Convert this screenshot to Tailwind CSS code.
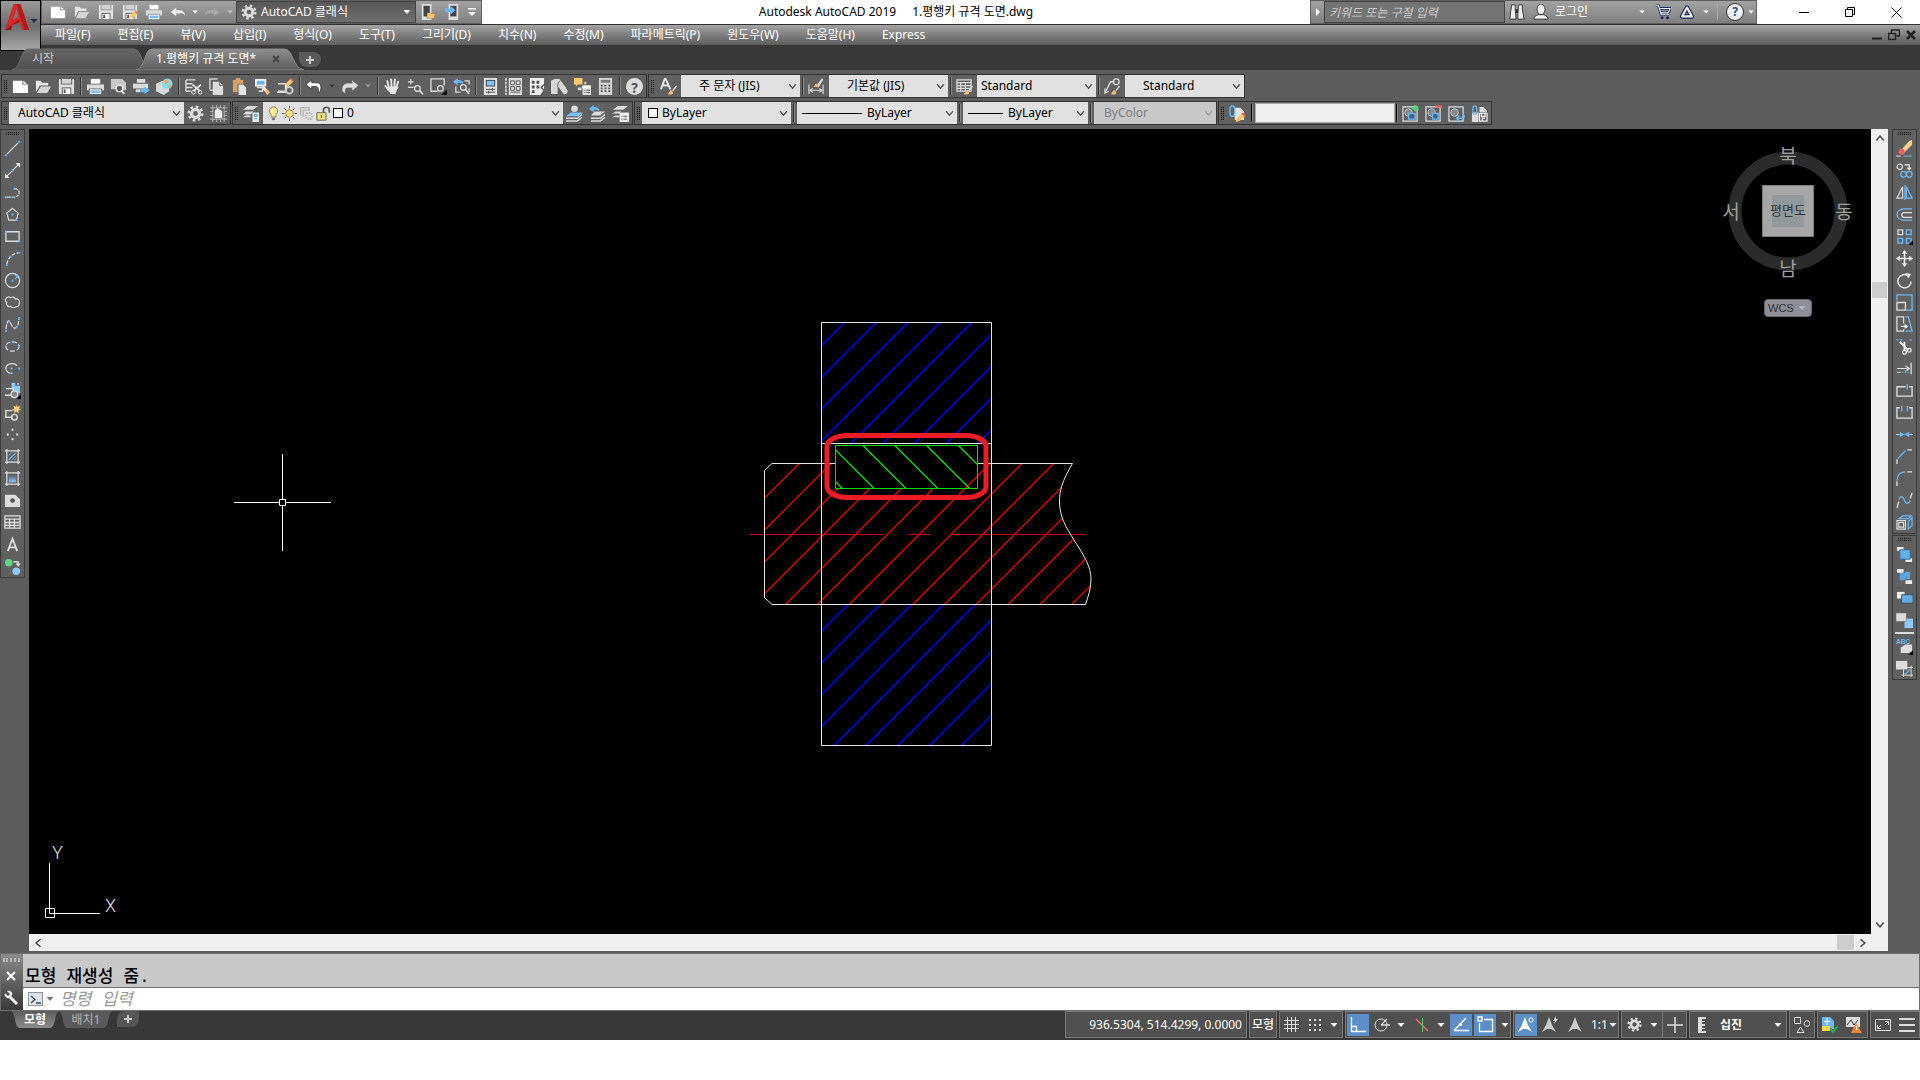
<!DOCTYPE html>
<html lang="ko">
<head>
<meta charset="utf-8">
<title>Autodesk AutoCAD 2019 - 1.평행키 규격 도면.dwg</title>
<script src="https://cdn.jsdelivr.net/npm/@tailwindcss/browser@4"></script>
</head>
<body class="flex h-screen flex-col overflow-hidden bg-white pb-10 font-['Noto_Sans','Noto_Sans_CJK_KR',sans-serif] text-xs text-white">

<!-- Icon library -->
<svg width="0" height="0" class="absolute" aria-hidden="true">
<defs>
<linearGradient id="g-blue" x2="0" y2="1"><stop offset="0" stop-color="#4a5a6a"/><stop offset="1" stop-color="#8cc8fa"/></linearGradient>
<linearGradient id="g-tab" x2="0" y2="1"><stop offset="0" stop-color="#8e8e8e"/><stop offset="1" stop-color="#5c5c5c"/></linearGradient>
<linearGradient id="g-tab-off" x2="0" y2="1"><stop offset="0" stop-color="#666"/><stop offset="1" stop-color="#505050"/></linearGradient>
<linearGradient id="g-btab" x2="0" y2="1"><stop offset="0" stop-color="#5c5c5c"/><stop offset="1" stop-color="#8c8c8c"/></linearGradient>
<symbol id="caret" viewBox="0 0 8 8"><path d="M0.500 2h7L4 6z" fill="currentColor"/></symbol>
<symbol id="chev" viewBox="0 0 8 8"><path d="M1 2l3 3.500 3-3.500" fill="none" stroke="currentColor" stroke-width="1.200"/></symbol>
<symbol id="new" viewBox="0 0 18 18"><path d="M1 3h10v4h6v9H1z" fill="#fff"/><path d="M12 3l4 3h-4z" fill="#fff"/></symbol>
<symbol id="open" viewBox="0 0 18 18"><path d="M1 15V3h5l2 2h6v3H5z" fill="#e6e6e6"/><path d="M6 9h11l-4 7H2z" fill="#d4d4d4"/></symbol>
<symbol id="save" viewBox="0 0 18 18"><path d="M1 1h2v6h12V1h2v16H1z" fill="#e0e0e0"/><path d="M4 1h10v5H4z" fill="#d2d2d2"/><path d="M4 10h10v7H4z" fill="#555"/><path d="M5 11h8v6H5z" fill="#fff"/><path d="M6 12h2v4H6z" fill="#555"/></symbol>
<symbol id="pencil" viewBox="0 0 10 10"><path d="M0 10l1-4 5-5 3 3-5 5z" fill="#fdc76b"/><path d="M6 1l1-1 3 3-1 1z" fill="#f0604c"/><path d="M0 10l.8-2.800 2 2z" fill="#fff"/></symbol>
<symbol id="saveas" viewBox="0 0 18 18"><use href="#save" width="18" height="18"/><use href="#pencil" x="8" y="7" width="10" height="10"/></symbol>
<symbol id="plot" viewBox="0 0 18 18"><path d="M4 1h10v5H4z" fill="#fff"/><path d="M0 7h18v6h-2v-2H2v2H0z" fill="#dcdcdc"/><path d="M3 12h12v5H3z" fill="#fff"/><path d="M4 13h10v3H4z" fill="#7cc0f8"/></symbol>
<symbol id="preview" viewBox="0 0 18 18"><path d="M1 1h12l4 4v8h-3a4 4 0 0 0-8-1H1z" fill="#c8c8c8"/><circle cx="10" cy="11" r="3.500" fill="#5c5c5c" stroke="#f0f0f0" stroke-width="1.400"/><path d="M12 13l3 4" stroke="#eee" stroke-width="2"/></symbol>
<symbol id="publish" viewBox="0 0 18 18"><path d="M4 1h9v4H4zM0 6h16v5H0zM3 12h5v3H3z" fill="#dcdcdc"/><path d="M8 11h4V9l6 4-6 4v-2H8z" fill="#6cb8f5"/></symbol>
<symbol id="globe" viewBox="0 0 18 18"><path d="M0 6l7-3 7 4v7l-6 4-8-4z" fill="#d8d8d8"/><circle cx="12" cy="6" r="5.500" fill="#7fe0ea"/><path d="M8 3l4-2 2 3-4 3zM13 8l4-1-2 4z" fill="#f2a477"/></symbol>
<symbol id="cut" viewBox="0 0 18 18"><path d="M1 2h10M1 6h7M1 10h7M1 14h5M1 2v12" stroke="#dcdcdc" stroke-width="1.500" fill="none"/><path d="M8 7l8 7M17 7l-8 7" stroke="#eee" stroke-width="1.800"/><circle cx="9" cy="15" r="2" fill="none" stroke="#eee"/><circle cx="16" cy="15" r="2" fill="none" stroke="#eee"/></symbol>
<symbol id="copy" viewBox="0 0 18 18"><path d="M2 12V1h8M2 13h3" stroke="#d0d0d0" fill="none" stroke-width="1.500"/><path d="M5 4h7l4 4v10H5z" fill="#dcdcdc"/><path d="M12 4v4h4" fill="none" stroke="#777"/></symbol>
<symbol id="paste" viewBox="0 0 18 18"><path d="M2 2h3V0h5v2h3v4H7v9H2z" fill="#d3a067"/><path d="M8 7h5l3 3v8H8z" fill="#e4e4e4"/></symbol>
<symbol id="brush" viewBox="0 0 10 10"><path d="M5 5l4-5 1 1-4 5z" fill="#ddd"/><path d="M0 9c2-1 2-4 4-4l2 2c0 3-4 3-6 2z" fill="#fdc07a"/></symbol>
<symbol id="match" viewBox="0 0 18 18"><path d="M1 1h12v8H1z" fill="#eee"/><path d="M3 3h8v4H3z" fill="#6cb8f5"/><path d="M3 10h6v4H5" fill="none" stroke="#ddd" stroke-width="1.500"/><path d="M9 11l2-2 6 6-3 3z" fill="#fdc07a"/><path d="M8 9l3 0 2 3-2 2z" fill="#eee"/></symbol>
<symbol id="blk" viewBox="0 0 18 18"><path d="M1 6h8v8H1M0 15h10" stroke="#ddd" fill="none" stroke-width="1.500"/><circle cx="13" cy="13" r="3.500" fill="none" stroke="#ccc" stroke-width="2"/><use href="#pencil" x="8" y="0" width="10" height="10"/></symbol>
<symbol id="undo" viewBox="0 0 18 18"><path d="M0 7l6-5v3h5c4 0 6 3 4 9l-2 2c1-6-1-7-3-7H6v3z" fill="#fff" stroke="#333" stroke-width=".8"/></symbol>
<symbol id="redo" viewBox="0 0 18 18"><path d="M18 8l-6-5v3H7c-4 0-6 3-5 8l2 2c0-5 1-6 3-6h5v3z" fill="#ddd" stroke="#ddd" stroke-width=".5"/></symbol>
<symbol id="undo2" viewBox="0 0 18 18"><path d="M1 9l6-5v3c6-1 9 1 10 6-2-3-5-3-10-2v3z" fill="#eee"/></symbol>
<symbol id="redo2" viewBox="0 0 18 18"><path d="M17 9l-6-5v3C5 6 2 8 1 13c2-3 5-3 10-2v3z" fill="#a8a8a8"/></symbol>
<symbol id="pan" viewBox="0 0 18 18"><path d="M5 10L3.500 3M8 9L7.500 1.500M11 9l.5-7.500M13 10l2-6M5 13L1.500 8.500" stroke="#e6e6e6" stroke-width="2" stroke-linecap="round"/><path d="M4 9h10c2 0 1 2 0 3l-2 5H7L3 11z" fill="#e6e6e6"/></symbol>
<symbol id="zoomrt" viewBox="0 0 18 18"><path d="M1 4h6M4 1v6M1 10h6" stroke="#ddd" stroke-width="1.300"/><circle cx="11" cy="11" r="3" fill="none" stroke="#ddd" stroke-width="1.400"/><path d="M13 13l4 4" stroke="#ddd" stroke-width="1.800"/></symbol>
<symbol id="zoomwin" viewBox="0 0 18 18"><path d="M8 14H1V1h14v7" fill="none" stroke="#ddd" stroke-width="1.400"/><circle cx="11" cy="11" r="3" fill="none" stroke="#ddd" stroke-width="1.300"/><path d="M18 12v6h-6z" fill="#000"/></symbol>
<symbol id="zoomprev" viewBox="0 0 18 18"><path d="M3 9v6h5M12 3h5v4M17 11v4" stroke="#ddd" fill="none" stroke-width="1.400"/><circle cx="11" cy="10" r="3" fill="none" stroke="#ddd" stroke-width="1.400"/><path d="M13 12l4 5" stroke="#ddd" stroke-width="1.600"/><path d="M0 4l5-4v2c4 0 6 1 6 5-2-2-3-2-6-2v3z" fill="#6cb8f5"/></symbol>
<symbol id="props" viewBox="0 0 18 18"><path d="M2 0h14v18H2z" fill="#e4e4e4"/><path d="M4 2h10v7H4z" fill="#444"/><path d="M5 3h8v5H5z" fill="#7cc4ff"/><path d="M4 12h10M4 15h10M11 10.500v3M7 13.500v3" stroke="#444"/></symbol>
<symbol id="dcenter" viewBox="0 0 18 18"><path d="M1 0v18" stroke="#ccc" stroke-width="2" stroke-dasharray="3 1"/><path d="M4 0h14v18H4z" fill="#ddd"/><path d="M6 3h4v4H6zM12 3h4v4h-4zM6 9h4v4H6zM12 9h4v4h-4zM6 15h10" fill="none" stroke="#555"/></symbol>
<symbol id="palette" viewBox="0 0 18 18"><path d="M2 0h15v12l-4 6H2z" fill="#eee"/><path d="M4 3h3v3H4zM9 3h3v3H9zM4 8h3v3H4zM9 8h3v3H9zM4 13h3v3H4z" fill="#555"/><path d="M18 6l-4 4 3 3" fill="none" stroke="#5c5c5c" stroke-width="1.500"/></symbol>
<symbol id="sheet" viewBox="0 0 18 18"><path d="M0 3l4-2h5l8 11c2 3-1 6-4 5L7 9v8H0z" fill="#d8d8d8"/><path d="M7 9c0-4 2-6 3-6M7 9l6 8" fill="none" stroke="#666"/></symbol>
<symbol id="markup" viewBox="0 0 18 18"><path d="M0 0h9v7H4L2 9V7H0z" fill="#fdc96f"/><path d="M11 4h2v3h-2zM4 10h4v3H4zM9 8h9v10H9z" fill="#ddd"/><path d="M9 8h9v3H9z" fill="#fff"/><path d="M11 13h1M13 13h4M11 15.500h1M13 15.500h4" stroke="#555"/></symbol>
<symbol id="calc" viewBox="0 0 18 18"><path d="M2 0h14v18H2z" fill="#d6d6d6"/><path d="M4 2h10v3H4z" fill="#777"/><path d="M4 8h10M4 11h10M4 14h10" stroke="#555" stroke-width="1.800" stroke-dasharray="2 2"/></symbol>
<symbol id="tstyle" viewBox="0 0 18 18"><path d="M1 12L5 1h1l5 11M3 8h6" fill="none" stroke="#e6e6e6" stroke-width="2"/><use href="#brush" x="8" y="8" width="10" height="10"/></symbol>
<symbol id="dstyle" viewBox="0 0 18 18"><path d="M1 7v10M16 7v10M2 13h13M5 11l-3 2 3 2M12 11l3 2-3 2" fill="none" stroke="#ddd" stroke-width="1.200"/><path d="M9 8l6-8 1 2-5 8z" fill="#ddd"/><path d="M5 9c2 0 2-3 4-3l2 2c-1 2-4 2-6 1z" fill="#fdc07a"/></symbol>
<symbol id="tbstyle" viewBox="0 0 18 18"><path d="M1 2h15v12H1zM1 5h15M1 8h15M1 11h15M5 5v9M10 5v9" fill="none" stroke="#ddd" stroke-width="1.300"/><use href="#brush" x="8" y="8" width="10" height="10"/></symbol>
<symbol id="mlstyle" viewBox="0 0 18 18"><circle cx="13" cy="4" r="3" fill="none" stroke="#ddd" stroke-width="1.400"/><path d="M10 4H7L2 14M1 11l0 5 4-2" fill="none" stroke="#ddd" stroke-width="1.400"/><use href="#brush" x="7" y="8" width="10" height="10"/></symbol>
<symbol id="gear" viewBox="0 0 18 18"><circle cx="9" cy="9" r="4.300" fill="none" stroke="#dcdcdc" stroke-width="3.400"/><circle cx="9" cy="9" r="7.200" fill="none" stroke="#dcdcdc" stroke-width="2.600" stroke-dasharray="2.800 2.850"/></symbol>
<symbol id="wsave" viewBox="0 0 18 18"><path d="M3 0v18M15 0v18M0 3h18M0 15h18M7 0v3M11 0v3M0 7h3M0 11h3M15 7h3M15 11h3M7 15v3M11 15v3" stroke="#ccc" stroke-width=".8"/><path d="M5 6l3-3 5 4v7H5z" fill="#eee"/></symbol>
<symbol id="layers" viewBox="0 0 18 18"><path d="M5 1h11l-5 4H0zM3 7h8l-3 3H0zM0 13h8v-2l-5 0z" fill="#ddd"/><path d="M10 8h7v10h-7z" fill="#eee"/><path d="M12 10h3v2h-3zM12 14.500h3" stroke="#4a90d0" fill="none"/></symbol>
<symbol id="laycur" viewBox="0 0 18 18"><path d="M5 8h13l-5 4H0z" fill="#7cc4ff"/><path d="M0 14h12l5-4M0 17h12l5-4" fill="none" stroke="#ddd" stroke-width="1.500"/><circle cx="9" cy="4" r="3.500" fill="#ddd"/></symbol>
<symbol id="layprev" viewBox="0 0 18 18"><path d="M6 7h11l-5 4H2z" fill="#ddd"/><path d="M2 14h10l5-4M2 17h10l5-4" fill="none" stroke="#ddd" stroke-width="1.500"/><path d="M0 4l5-4v2c4 0 6 1 6 5-2-2-3-2-6-2v3z" fill="#6cb8f5"/></symbol>
<symbol id="laystate" viewBox="0 0 18 18"><path d="M6 1h11l-5 4H1zM4 7h6l-2 2H0zM0 13h8v-2H3z" fill="#ddd"/><path d="M8 8h10v10H8z" fill="#eee"/><path d="M10 12h1M12 12h4M10 15h1M12 15h4" stroke="#555"/></symbol>
<symbol id="bulb" viewBox="0 0 16 18"><path d="M8 1a5 5 0 0 1 3 9v3H5v-3a5 5 0 0 1 3-9z" fill="#fde9a0" stroke="#8a7434" stroke-width="1"/><path d="M6 14h4v3H6z" fill="#777"/></symbol>
<symbol id="sun" viewBox="0 0 18 18"><circle cx="9" cy="9" r="4.500" fill="#fde08a" stroke="#a08030"/><path d="M9 0v3M9 15v3M0 9h3M15 9h3M3 3l2 2M13 13l2 2M3 15l2-2M13 5l2-2" stroke="#666" stroke-width="1.200"/></symbol>
<symbol id="vpf" viewBox="0 0 18 18"><path d="M2 11V2h10v4M5 13V5h6" fill="none" stroke="#b4b4b4" stroke-width="1.600"/><circle cx="12" cy="12" r="4" fill="none" stroke="#b4b4b4" stroke-width="2" stroke-dasharray="2 1"/></symbol>
<symbol id="lock" viewBox="0 0 18 18"><path d="M9 8V5a3.500 3.500 0 0 1 7 0v3" fill="none" stroke="#555" stroke-width="2"/><path d="M1 8h11v9H1z" fill="#f5e07c" stroke="#555"/><path d="M6.500 11v3" stroke="#555" stroke-width="1.500"/></symbol>
<symbol id="clipedit" viewBox="0 0 18 18"><path d="M6 3h6l4 4v9H6z" fill="#e4e4e4"/><rect x="1" y="1" width="5" height="11" rx="2.500" fill="none" stroke="#6cb8f5" stroke-width="1.500"/><path d="M7 18l1-4 6-5 3 3-6 5z" fill="#fdc76b"/><path d="M13 9l2-1 3 3-1 2z" fill="#f0604c"/></symbol>
<symbol id="ref" viewBox="0 0 18 18"><path d="M1 2h15v15H1z" fill="none" stroke="#ddd" stroke-width="1.300"/><circle cx="7" cy="8" r="4" fill="#888" stroke="#b8c8d8"/></symbol>
<symbol id="refadd" viewBox="0 0 18 18"><use href="#ref" width="18" height="18"/><path d="M7 9h7v6H7z" fill="#41617a" stroke="#6cb8f5" stroke-width="1.400"/><path d="M14 0v7M10.500 3.500h7" stroke="#4fd07a" stroke-width="2.400"/></symbol>
<symbol id="refdel" viewBox="0 0 18 18"><use href="#ref" width="18" height="18"/><path d="M8 9h6v6H8z" fill="#41617a" stroke="#6cb8f5" stroke-width="1.400"/><path d="M11 1.500h7" stroke="#f0605c" stroke-width="2.600"/></symbol>
<symbol id="refback" viewBox="0 0 18 18"><use href="#ref" width="18" height="18"/><path d="M10 14h5c3 0 3-4 0-4M12 11l-3 3 3 3" fill="none" stroke="#6cb8f5" stroke-width="1.500"/></symbol>
<symbol id="refsave" viewBox="0 0 18 18"><path d="M1 8h7v10H1zM9 2h4l4 4v2H9z" fill="#ddd"/><rect x="2" y="1" width="4" height="9" rx="2" fill="none" stroke="#6cb8f5" stroke-width="1.300"/><path d="M9 9h8v8H9zM11 9v3h4V9M12 17v-3h3" fill="none" stroke="#eee" stroke-width="1.300"/></symbol>
<!-- draw tools -->
<symbol id="line" viewBox="0 0 18 18"><path d="M3 15L15 3" stroke="#ddd" stroke-width="1.300"/><path d="M1 15h2v2H1zM15 1h2v2h-2z" fill="#6cb8f5"/></symbol>
<symbol id="xline" viewBox="0 0 18 18"><path d="M2 16L16 2" stroke="#ddd" stroke-width="1.300"/><path d="M17 1v5l-5-5zM1 17v-5l5 5z" fill="#ddd"/><path d="M8 8h2v2H8z" fill="#6cb8f5"/></symbol>
<symbol id="pline" viewBox="0 0 18 18"><path d="M3 14h7M11 5c6 0 7 7 2 8" fill="none" stroke="#ddd" stroke-width="1.300" stroke-dasharray="4 1"/><path d="M1 13h2v2H1zM10 4h2v2h-2zM10 13h2v2h-2z" fill="#6cb8f5"/></symbol>
<symbol id="polygon" viewBox="0 0 18 18"><path d="M9 2.500l6 5-2 7.500H5L3 7.500z" fill="none" stroke="#ddd" stroke-width="1.200"/><path d="M8 8h2v2H8zM12 14h2v2h-2z" fill="#6cb8f5"/></symbol>
<symbol id="rect" viewBox="0 0 18 18"><path d="M2 4h14v10H2z" fill="none" stroke="#ddd" stroke-width="1.400"/><path d="M1 3h2v2H1zM15 13h2v2h-2z" fill="#6cb8f5"/></symbol>
<symbol id="arc" viewBox="0 0 18 18"><path d="M3 15C4 9 8 4 15 3" fill="none" stroke="#ddd" stroke-width="1.300" stroke-dasharray="4 1.500"/><path d="M2 15h2v2H2zM6 6h2v2H6zM15 2h2v2h-2z" fill="#6cb8f5"/></symbol>
<symbol id="circle" viewBox="0 0 18 18"><circle cx="9" cy="9" r="7.500" fill="none" stroke="#ddd" stroke-width="1.300"/><path d="M8 8h2v2H8zM11 3h4v4l-1-1-2 2-1-1 2-2z" fill="#6cb8f5"/></symbol>
<symbol id="cloud" viewBox="0 0 18 18"><path d="M3 9a3 3 0 0 1-1-4 3 3 0 0 1 5-1 3 3 0 0 1 5 1.500 3 3 0 0 1 4 4 3 3 0 0 1-3 4 4 3 0 0 1-6-.5 3 3 0 0 1-4-4z" fill="none" stroke="#ddd" stroke-width="1.200"/></symbol>
<symbol id="spline" viewBox="0 0 18 18"><path d="M2 14C3 8 4 3 6 6s4 9 7 6 2-6 3-9" fill="none" stroke="#ddd" stroke-width="1.300" stroke-dasharray="5 1"/><path d="M1 15h2v2H1zM4 5h2v2H4zM12 11h2v2h-2zM15 1h2v2h-2z" fill="#6cb8f5"/></symbol>
<symbol id="ellipse" viewBox="0 0 18 18"><ellipse cx="9" cy="9" rx="7" ry="5" fill="none" stroke="#ddd" stroke-width="1.300" stroke-dasharray="5 2"/><path d="M1 8h2v2H1zM15 8h2v2h-2zM8 3h2v2H8z" fill="#6cb8f5"/></symbol>
<symbol id="earc" viewBox="0 0 18 18"><path d="M14 6C10 2 2 4 2 9c0 2 2 5 5 5" fill="none" stroke="#ddd" stroke-width="1.300"/><path d="M7 8h2v2H7zM15 8h2v2h-2zM7 13h2v2H7z" fill="#6cb8f5"/></symbol>
<symbol id="insert" viewBox="0 0 18 18"><path d="M8 1h4v3h5v8h-4L8 7zM14 1h2v2h-2z" fill="#8ccaff"/><path d="M2 7h8v7H2M1 14h10" fill="none" stroke="#ddd" stroke-width="1.500"/><circle cx="11" cy="13" r="3.500" fill="#888" stroke="#ddd" stroke-width="1.300"/><path d="M18 13v5h-5z" fill="#000"/></symbol>
<symbol id="mkblk" viewBox="0 0 18 18"><path d="M9 7H2v7M1 14h8" fill="none" stroke="#ddd" stroke-width="1.500"/><circle cx="11" cy="14" r="3" fill="none" stroke="#ddd" stroke-width="1.500"/><path d="M13 0l1 3 3-1-1 3 2 1-3 1 1 3-3-2-2 2 0-3-3-1 3-1-1-3 3 1z" fill="#ffd280"/></symbol>
<symbol id="point" viewBox="0 0 18 18"><path d="M8 3h2v2H8zM3 8h2v2H3zM13 8h2v2h-2zM8 13h2v2H8z" fill="#eee"/></symbol>
<symbol id="hatch" viewBox="0 0 18 18"><path d="M3 1v16M15 1v16M1 3h16M1 15h16" stroke="#ddd" stroke-width="1.300"/><path d="M5 8l3-3M5 12l7-7M8 13l5-5M5 13l8-8M11 13l2-2" stroke="#6cb8f5"/></symbol>
<symbol id="grad" viewBox="0 0 18 18"><path d="M3 1v16M15 1v16M1 3h16M1 15h16" stroke="#ddd" stroke-width="1.300"/><path d="M5 5h8v8H5z" fill="url(#g-blue)"/></symbol>
<symbol id="region" viewBox="0 0 18 18"><path d="M1 3h11l5 5v8H1z" fill="#ddd"/><circle cx="9" cy="9" r="2.500" fill="#555"/></symbol>
<symbol id="table" viewBox="0 0 18 18"><path d="M1 2h16v13H1zM1 5.500h16M1 9h16M1 12h16M6 5v10M11 5v10" fill="none" stroke="#ddd" stroke-width="1.400"/></symbol>
<symbol id="mtext" viewBox="0 0 18 18"><path d="M4 16L9 3l5 13M5.500 12h7" fill="none" stroke="#ddd" stroke-width="2"/></symbol>
<symbol id="addsel" viewBox="0 0 18 18"><circle cx="5" cy="5" r="4" fill="#5fd880"/><circle cx="13" cy="14" r="4" fill="#8ccaff"/><path d="M10 4h5v4M13 6l2 2 2-2" fill="none" stroke="#eee" stroke-width="1.300"/></symbol>
<!-- modify tools -->
<symbol id="erase" viewBox="0 0 18 18"><path d="M5 11L14 1l3-1v5l-9 9z" fill="#fdd08a"/><circle cx="6" cy="12.500" r="3.200" fill="#f0605c"/><path d="M0 17h5" stroke="#ddd"/><path d="M8 17h9" stroke="#6cb8f5"/></symbol>
<symbol id="mcopy" viewBox="0 0 18 18"><circle cx="4" cy="5" r="2.800" fill="none" stroke="#ddd" stroke-width="1.300"/><path d="M9 3h5v5M12 6l2 2 2-2" fill="none" stroke="#eee" stroke-width="1.300"/><circle cx="8" cy="13" r="3" fill="none" stroke="#6cb8f5" stroke-width="1.400"/><circle cx="14" cy="13" r="3" fill="none" stroke="#6cb8f5" stroke-width="1.400"/></symbol>
<symbol id="mirror" viewBox="0 0 18 18"><path d="M7 3v12H1z" fill="none" stroke="#ddd" stroke-width="1.300"/><path d="M9.500 1v16M11 3v12h6z" fill="none" stroke="#6cb8f5" stroke-width="1.300"/></symbol>
<symbol id="offset" viewBox="0 0 18 18"><path d="M17 3H8c-9 0-9 12 0 12h9" fill="none" stroke="#6cb8f5" stroke-width="1.400"/><path d="M17 7H9c-4 0-4 5 0 5h8" fill="none" stroke="#ddd" stroke-width="1.400"/></symbol>
<symbol id="array" viewBox="0 0 18 18"><path d="M2 2h5v5H2z" fill="none" stroke="#ddd" stroke-width="1.400"/><path d="M11 2h5v5h-5zM2 11h5v5H2zM11 11h5v5h-5z" fill="none" stroke="#6cb8f5" stroke-width="1.400"/><path d="M18 13v5h-5z" fill="#000"/></symbol>
<symbol id="move" viewBox="0 0 18 18"><path d="M9 3v12M3 9h12" stroke="#eee" stroke-width="1.600"/><path d="M9 0l3 4H6zM9 18l3-4H6zM0 9l4-3v6zM18 9l-4-3v6z" fill="#eee"/></symbol>
<symbol id="rotate" viewBox="0 0 18 18"><path d="M13 4a7 7 0 1 0 3 6" fill="none" stroke="#eee" stroke-width="1.500"/><path d="M10 1l6 1-3 5z" fill="#eee"/></symbol>
<symbol id="scale" viewBox="0 0 18 18"><path d="M1 7V1h16v16h-6" fill="none" stroke="#6cb8f5" stroke-width="1.400"/><path d="M1 9h9v8H1z" fill="none" stroke="#ddd" stroke-width="1.400"/></symbol>
<symbol id="stretch" viewBox="0 0 18 18"><path d="M8 8V1H1v15h7v-2" fill="none" stroke="#ddd" stroke-width="1.400"/><path d="M10 1h3l4 15h-7" fill="none" stroke="#6cb8f5" stroke-width="1.400"/><path d="M5 11h6M9 9l3 2-3 2" stroke="#eee" fill="none" stroke-width="1.300"/></symbol>
<symbol id="trim" viewBox="0 0 18 18"><path d="M0 2h7M14 2h4" stroke="#6cb8f5" stroke-dasharray="3 1"/><path d="M4 4l9 9M9 4v9" stroke="#eee" stroke-width="2"/><circle cx="9" cy="15" r="2" fill="none" stroke="#eee" stroke-width="1.300"/><circle cx="14" cy="13" r="2" fill="none" stroke="#eee" stroke-width="1.300"/></symbol>
<symbol id="extend" viewBox="0 0 18 18"><path d="M16 3v12" stroke="#ddd" stroke-width="1.400"/><path d="M1 9h11M10 6l4 3-4 3" stroke="#eee" fill="none" stroke-width="1.300"/><path d="M1 13h4" stroke="#ddd"/><path d="M6 13h9" stroke="#6cb8f5" stroke-dasharray="2 1"/></symbol>
<symbol id="breakpt" viewBox="0 0 18 18"><path d="M10 5H1v10h16V5h-3" fill="none" stroke="#ddd" stroke-width="1.400"/><path d="M12 2v6" stroke="#6cb8f5" stroke-width="1.400"/></symbol>
<symbol id="break" viewBox="0 0 18 18"><path d="M4 4H1v11h16V4h-3" fill="none" stroke="#ddd" stroke-width="1.400"/><path d="M6 2v6M12 2v6" stroke="#6cb8f5" stroke-width="1.400"/></symbol>
<symbol id="join" viewBox="0 0 18 18"><path d="M0 9h18" stroke="#ddd"/><path d="M3 9h12" stroke="#6cb8f5"/><path d="M4 6l5 3-5 3zM14 6L9 9l5 3z" fill="#6cb8f5"/></symbol>
<symbol id="chamfer" viewBox="0 0 18 18"><path d="M1 17v-5M12 2h5" stroke="#ddd" stroke-width="1.400"/><path d="M2 11l8-8" stroke="#6cb8f5" stroke-width="1.400"/></symbol>
<symbol id="fillet" viewBox="0 0 18 18"><path d="M1 17v-5M12 2h5" stroke="#ddd" stroke-width="1.400"/><path d="M1 11c0-6 4-9 9-9" fill="none" stroke="#6cb8f5" stroke-width="1.400"/></symbol>
<symbol id="blend" viewBox="0 0 18 18"><path d="M1 17l2-7M15 7l2-6" stroke="#ddd" stroke-width="1.400"/><path d="M3 8c2-6 5-2 6 1s4 5 6 0" fill="none" stroke="#6cb8f5" stroke-width="1.400"/></symbol>
<symbol id="explode" viewBox="0 0 18 18"><path d="M1 7h9v9H1zM3 9h5v5H3z" fill="none" stroke="#ddd" stroke-width="1.300"/><path d="M3 5l4-3h9l-3 3zM13 8l4-4v8l-4 4z" fill="none" stroke="#6cb8f5" stroke-width="1.300"/></symbol>
<symbol id="front" viewBox="0 0 18 18"><path d="M1 1h7v4H1zM10 13h7v4h-7z" fill="#eee"/><path d="M4 4h11v10H4z" fill="#64aee8" stroke="#3a6a94"/></symbol>
<symbol id="back" viewBox="0 0 18 18"><path d="M4 5h6v-1h5v8H9v1H4z" fill="#5aa4e0"/><path d="M1 1h7v4H1zM10 13h7v4h-7z" fill="#eee"/></symbol>
<symbol id="above" viewBox="0 0 18 18"><path d="M1 2h8v7H1z" fill="#eee"/><path d="M6 5h12v9H6z" fill="#64aee8" stroke="#4a4a4a"/></symbol>
<symbol id="under" viewBox="0 0 18 18"><path d="M9 7h9v10H9z" fill="#8ccaff"/><path d="M0 1h11v9H0z" fill="#ddd" stroke="#5c5c5c" stroke-width=".5"/></symbol>
<symbol id="annfront" viewBox="0 0 18 18"><text x="0" y="6" font-size="7" font-weight="700" fill="#6cb8f5" font-family="Liberation Sans">ABC</text><path d="M5 10l5-3h7v7l-3 2H5z" fill="#ddd"/><path d="M18 13v5h-5z" fill="#000"/></symbol>
<symbol id="hback" viewBox="0 0 18 18"><path d="M0 1h12v9H0z" fill="#ddd"/><path d="M6 8h12M6 16h12M8 6v12M16 6v12" stroke="#ddd"/><path d="M9 15l6-6M10 15l5-4" stroke="#6cb8f5"/></symbol>
</defs>
</svg>

<header class="shrink-0">
<div class="flex">
  <!-- application menu button -->
  <button aria-label="응용프로그램 메뉴" class="flex h-[51px] w-[41px] shrink-0 border border-black bg-linear-to-b from-[#9a9a9a] via-[#6c6c6c] to-[#a8a8a8]">
    <svg class="mt-[2px] ml-1 h-7 w-6" viewBox="0 0 25 29"><path d="M0 28L9 1h7l9 27h-7l-3-8-7 2-1 6z" fill="#d8262c"/><path d="M12 6L8 18l6-4z" fill="#787878"/><path d="M0 28l15-11v3l-8 3-1 5z" fill="#8c1418"/><path d="M12 1h4l9 27h-5z" fill="#b01a20"/></svg>
    <svg class="mt-4 ml-px size-2 text-[#222c3c]"><use href="#caret"/></svg>
  </button>
  <div class="min-w-0 flex-1">
    <!-- title bar -->
    <div class="flex h-6 bg-white text-black">
      <div class="flex w-[441px] shrink-0 items-center border border-[#5e5e5e] bg-linear-to-b from-[#a2a2a2] to-[#808080] pl-1 text-white [&>*]:shrink-0 [&>button]:grid [&>button]:h-full [&>button]:w-6 [&>button]:place-items-center [&>button>svg]:size-4">
        <button aria-label="새로 만들기"><svg><use href="#new"/></svg></button>
        <button aria-label="열기"><svg><use href="#open"/></svg></button>
        <button aria-label="저장"><svg><use href="#save"/></svg></button>
        <button aria-label="다른 이름으로 저장"><svg><use href="#saveas"/></svg></button>
        <button aria-label="플롯"><svg><use href="#plot"/></svg></button>
        <button aria-label="명령 취소"><svg><use href="#undo2"/></svg></button>
        <svg class="mx-[2px] size-[6px]"><use href="#caret"/></svg>
        <button aria-label="명령 복구"><svg><use href="#redo2"/></svg></button>
        <svg class="mx-[3px] size-[6px] text-[#c8c8c8]"><use href="#caret"/></svg>
        <label class="relative flex h-[22px] w-[180px] items-center border border-[#444] bg-linear-to-b from-[#585858] to-[#6e6e6e] pl-1">
          <svg class="size-4 shrink-0"><use href="#gear"/></svg>
          <select aria-label="작업공간" class="h-full w-full appearance-none bg-transparent pl-1 outline-none"><option>AutoCAD 클래식</option></select>
          <svg class="pointer-events-none absolute right-1 size-2"><use href="#caret"/></svg>
        </label>
        <button aria-label="모바일에서 열기"><svg viewBox="0 0 18 18"><path d="M2 0h11v18H2z" fill="#ddd"/><path d="M4 2h7v12H4z" fill="#444"/><path d="M8 16v-6h4l1 1h4l-1 5z" fill="#fdc96f" stroke="#8a6a30" stroke-width=".5"/></svg></button>
        <button aria-label="모바일로 저장"><svg viewBox="0 0 18 18"><path d="M5 0h11v18H5z" fill="#ddd"/><path d="M7 2h7v12H7z" fill="#444"/><path d="M1 5h6V2l6 5-6 5V9H1z" fill="#6cb8f5"/></svg></button>
        <button aria-label="도구막대 사용자화" class="!w-4"><svg viewBox="0 0 16 16"><path d="M4 4h8v1.500H4zM4 8h8l-4 4z" fill="#fff"/></svg></button>
      </div>
      <h1 class="flex flex-1 items-center justify-center gap-4 whitespace-nowrap text-xs"><span>Autodesk AutoCAD 2019</span><span>1.평행키 규격 도면.dwg</span></h1>
      <div class="flex w-[447px] shrink-0 items-center border border-[#5e5e5e] bg-linear-to-b from-[#a2a2a2] to-[#808080] text-white">
        <button aria-label="검색 축소" class="grid w-[13px] place-items-center"><svg class="h-2 w-1" viewBox="0 0 4 8"><path d="M0 0l4 4-4 4z" fill="#fff"/></svg></button>
        <input type="search" aria-label="검색" placeholder="키워드 또는 구절 입력" class="h-[22px] w-[181px] border border-[#444] bg-[#747474] px-1 text-xs italic outline-none placeholder:text-[#ccc]">
        <button aria-label="찾기" class="grid w-6 place-items-center"><svg class="size-4" viewBox="0 0 18 18"><path d="M3 1h4v5l1 11H1L2 8zM11 1h4v5l2 11h-7V8z" fill="#eee" stroke="#333"/><path d="M7.500 6h3v4h-3z" fill="#333"/></svg></button>
        <button class="flex w-[110px] items-center gap-[6px]"><svg class="ml-1 size-4" viewBox="0 0 18 18"><ellipse cx="9" cy="6" rx="4.500" ry="6" fill="#eee" stroke="#333"/><path d="M1 17c0-4 4-4 5-5h6c1 1 5 1 5 5z" fill="#eee" stroke="#333"/></svg>로그인</button>
        <svg class="size-[6px]"><use href="#caret"/></svg>
        <button aria-label="앱 스토어" class="ml-[6px] grid w-6 place-items-center"><svg class="size-4" viewBox="0 0 18 18"><path d="M1 2h3l3 10h9M5 5h12l-2 5H6.500" fill="none" stroke="#1c2c5c" stroke-width="3"/><path d="M1 2h3l3 10h9M5 5h12l-2 5H6.500" fill="none" stroke="#eee" stroke-width="1.200"/><circle cx="8" cy="15.500" r="1.700" fill="#1c2c5c"/><circle cx="14" cy="15.500" r="1.700" fill="#1c2c5c"/></svg></button>
        <button aria-label="연결" class="grid w-6 place-items-center"><svg class="size-4" viewBox="0 0 18 18"><path d="M9 4l5.500 10h-11z" fill="none" stroke="#1c2c5c" stroke-width="5" stroke-linejoin="round"/><path d="M9 4l5.500 10h-11z" fill="none" stroke="#eee" stroke-width="2.500" stroke-linejoin="round"/></svg></button>
        <svg class="mx-1 size-[6px]"><use href="#caret"/></svg>
        <span class="mx-1 h-4 w-px bg-[#aaa]"></span>
        <button aria-label="도움말" class="ml-1 grid size-[18px] place-items-center rounded-full border border-[#333] bg-[#f0f0f0] text-xs font-bold text-[#1c4ca8]">?</button>
        <svg class="ml-1 size-[6px]"><use href="#caret"/></svg>
      </div>
      <div class="flex w-[163px] shrink-0 pl-6 text-black [&>button]:grid [&>button]:w-[46px] [&>button]:place-items-center">
        <button aria-label="최소화"><svg class="size-[10px]"><path d="M0 5.500h10" stroke="#000"/></svg></button>
        <button aria-label="이전 크기로"><svg class="size-[10px]"><path d="M.5 2.500h7v7h-7zM2.500 2.500v-2h7v7h-2" fill="none" stroke="#000"/></svg></button>
        <button aria-label="닫기"><svg class="size-[11px]"><path d="M.5.5l10 10M10.500.5l-10 10" stroke="#000"/></svg></button>
      </div>
    </div>
    <!-- menu bar -->
    <nav class="mb-[6px] flex h-[21px] items-center border-t border-[#333] bg-linear-to-b from-[#a4a4a4] to-[#5c5c5c] pl-[14px] [&>button]:mr-[27px] [&>button]:whitespace-nowrap">
      <button>파일(F)</button><button>편집(E)</button><button>뷰(V)</button><button>삽입(I)</button><button>형식(O)</button><button>도구(T)</button><button>그리기(D)</button><button>치수(N)</button><button>수정(M)</button><button>파라메트릭(P)</button><button>윈도우(W)</button><button>도움말(H)</button><button>Express</button>
      <div class="ml-auto flex items-center gap-[6px] pr-1">
        <svg class="h-3 w-[10px]"><path d="M0 9.500h10" stroke="#222" stroke-width="2"/></svg>
        <svg class="size-3"><path d="M.5 4.500h7v6h-7zM3.500 4v-3h8v6h-3" fill="none" stroke="#222" stroke-width="1.500"/></svg>
        <svg class="h-3 w-[10px]"><path d="M1 2l8 8M9 2l-8 8" stroke="#222" stroke-width="2.500"/></svg>
      </div>
    </nav>
  </div>
</div>

<!-- file tabs -->
<div class="-mt-[6px] flex h-[25px] items-end bg-[#383838] pl-3" role="tablist">
  <button role="tab" aria-selected="false" class="relative -mr-3 h-[22px] w-[136px] text-left text-[#c8c8c8]">
    <svg class="absolute inset-0 size-full" viewBox="0 0 136 22" preserveAspectRatio="none"><path d="M0 22C10 20 8 1 16 1H122c8 0 8 19 14 21z" fill="url(#g-tab-off)" stroke="#6c6c6c"/></svg>
    <span class="relative pl-5">시작</span>
  </button>
  <button role="tab" aria-selected="true" class="relative h-[22px] w-[168px] text-left">
    <svg class="absolute inset-0 size-full" viewBox="0 0 168 22" preserveAspectRatio="none"><path d="M0 22C10 20 8 1 16 1H148c10 0 8 19 20 21z" fill="url(#g-tab)" stroke="#8a8a8a"/></svg>
    <span class="relative flex items-center gap-4 pl-5 whitespace-nowrap">1.평행키 규격 도면*<svg class="size-2"><path d="M1 1l6 6M7 1l-6 6" stroke="#444" stroke-width="2"/></svg></span>
  </button>
  <button aria-label="새 도면" class="mb-[3px] ml-[-5px] grid h-[15px] w-[22px] place-items-center rounded-tr-lg rounded-br-lg rounded-bl-lg bg-[#5a5a5a]"><svg class="size-2"><path d="M4 0v8M0 4h8" stroke="#ccc" stroke-width="2"/></svg></button>
</div>
</header>

<!-- toolbars -->
<div class="flex shrink-0 flex-col gap-[3px] bg-[#5c5c5c] py-1 text-[#555]">
  <div class="flex h-6 gap-px pl-px">
    <div role="toolbar" aria-label="표준" class="flex items-center border border-[#333] bg-[#606060] pl-[2px] [&_button]:grid [&_button]:h-5 [&_button]:w-[23px] [&_button]:place-items-center [&_button>svg]:size-[17px]">
      <span class="mr-[2px] h-[13px] w-[3px] border-x border-dotted border-black"></span>
      <button aria-label="새로 만들기"><svg><use href="#new"/></svg></button>
      <button aria-label="열기"><svg><use href="#open"/></svg></button>
      <button aria-label="저장"><svg><use href="#save"/></svg></button>
      <span class="mx-[2px] h-[18px] w-[2px] border-l border-[#333] bg-[#888]"></span>
      <button aria-label="플롯"><svg><use href="#plot"/></svg></button>
      <button aria-label="플롯 미리보기"><svg><use href="#preview"/></svg></button>
      <button aria-label="게시"><svg><use href="#publish"/></svg></button>
      <button aria-label="3DDWF"><svg><use href="#globe"/></svg></button>
      <span class="mx-[2px] h-[18px] w-[2px] border-l border-[#333] bg-[#888]"></span>
      <button aria-label="잘라내기"><svg><use href="#cut"/></svg></button>
      <button aria-label="복사"><svg><use href="#copy"/></svg></button>
      <button aria-label="붙여넣기"><svg><use href="#paste"/></svg></button>
      <button aria-label="특성 일치"><svg><use href="#match"/></svg></button>
      <button aria-label="블록 편집기"><svg><use href="#blk"/></svg></button>
      <span class="mx-[2px] h-[18px] w-[2px] border-l border-[#333] bg-[#888]"></span>
      <button aria-label="명령 취소"><svg><use href="#undo"/></svg></button>
      <svg class="mx-[3px] size-[6px] text-[#333]"><use href="#caret"/></svg>
      <button aria-label="명령 복구"><svg><use href="#redo"/></svg></button>
      <svg class="mx-[4px] size-[6px] text-[#999]"><use href="#caret"/></svg>
      <span class="mx-[2px] h-[18px] w-[2px] border-l border-[#333] bg-[#888]"></span>
      <button aria-label="초점이동"><svg><use href="#pan"/></svg></button>
      <button aria-label="실시간 줌"><svg><use href="#zoomrt"/></svg></button>
      <button aria-label="줌 윈도우"><svg><use href="#zoomwin"/></svg></button>
      <button aria-label="이전 줌"><svg><use href="#zoomprev"/></svg></button>
      <span class="mx-[2px] h-[18px] w-[2px] border-l border-[#333] bg-[#888]"></span>
      <button aria-label="특성"><svg><use href="#props"/></svg></button>
      <button aria-label="디자인센터"><svg><use href="#dcenter"/></svg></button>
      <button aria-label="도구 팔레트"><svg><use href="#palette"/></svg></button>
      <button aria-label="시트 세트"><svg><use href="#sheet"/></svg></button>
      <button aria-label="표식 세트"><svg><use href="#markup"/></svg></button>
      <button aria-label="빠른계산기"><svg><use href="#calc"/></svg></button>
      <span class="mx-[2px] h-[18px] w-[2px] border-l border-[#333] bg-[#888]"></span>
      <button aria-label="도움말"><span class="grid size-[17px] place-items-center rounded-full bg-[#ddd] text-sm font-bold text-[#555]">?</span></button>
    </div>
    <div role="toolbar" aria-label="스타일" class="flex items-center border border-[#333] bg-[#606060] [&_button]:grid [&_button]:h-5 [&_button]:w-[25px] [&_button]:place-items-center [&_button>svg]:size-[17px] [&_label]:relative [&_label]:flex [&_label]:h-[22px] [&_label]:w-[119px] [&_label]:items-center [&_label]:bg-[#e1e1e1] [&_select]:h-full [&_select]:w-full [&_select]:appearance-none [&_select]:bg-transparent [&_select]:text-black [&_select]:outline-none">
      <span class="mx-[2px] h-[13px] w-[3px] border-x border-dotted border-black"></span>
      <button aria-label="문자 스타일"><svg><use href="#tstyle"/></svg></button>
      <label><select aria-label="문자 스타일 목록" class="pl-[18px]"><option>주 문자 (JIS)</option></select><svg class="pointer-events-none absolute right-[3px] size-[9px]"><use href="#chev"/></svg></label>
      <span class="ml-[2px] h-[18px] w-[2px] border-l border-[#333] bg-[#888]"></span>
      <button aria-label="치수 스타일"><svg><use href="#dstyle"/></svg></button>
      <label><select aria-label="치수 스타일 목록" class="pl-[18px]"><option>기본값 (JIS)</option></select><svg class="pointer-events-none absolute right-[3px] size-[9px]"><use href="#chev"/></svg></label>
      <span class="ml-[2px] h-[18px] w-[2px] border-l border-[#333] bg-[#888]"></span>
      <button aria-label="테이블 스타일"><svg><use href="#tbstyle"/></svg></button>
      <label><select aria-label="테이블 스타일 목록" class="pl-1"><option>Standard</option></select><svg class="pointer-events-none absolute right-[3px] size-[9px]"><use href="#chev"/></svg></label>
      <span class="ml-[2px] h-[18px] w-[2px] border-l border-[#333] bg-[#888]"></span>
      <button aria-label="다중 지시선 스타일"><svg><use href="#mlstyle"/></svg></button>
      <label><select aria-label="다중 지시선 스타일 목록" class="pl-[18px]"><option>Standard</option></select><svg class="pointer-events-none absolute right-[3px] size-[9px]"><use href="#chev"/></svg></label>
    </div>
  </div>

  <div class="flex h-6 gap-px pl-px [&_button]:grid [&_button]:h-5 [&_button]:w-[23px] [&_button]:shrink-0 [&_button]:place-items-center [&_button>svg]:size-[17px] [&_label]:relative [&_label]:flex [&_label]:h-[22px] [&_label]:items-center [&_label]:bg-[#e1e1e1] [&_select]:h-full [&_select]:w-full [&_select]:appearance-none [&_select]:bg-transparent [&_select]:text-black [&_select]:outline-none">
    <div role="toolbar" aria-label="작업공간" class="flex w-[230px] items-center border border-[#333] bg-[#606060]">
      <span class="mx-[2px] h-[13px] w-[3px] border-x border-dotted border-black"></span>
      <label class="w-[176px]"><select aria-label="작업공간 목록" class="pl-[9px]"><option>AutoCAD 클래식</option></select><svg class="pointer-events-none absolute right-[3px] size-[9px]"><use href="#chev"/></svg></label>
      <button aria-label="작업공간 설정"><svg><use href="#gear"/></svg></button>
      <button aria-label="내 작업공간"><svg><use href="#wsave"/></svg></button>
    </div>
    <div role="toolbar" aria-label="도면층" class="flex w-[401px] items-center border border-[#333] bg-[#606060]">
      <span class="mx-[2px] h-[13px] w-[3px] border-x border-dotted border-black"></span>
      <button aria-label="도면층 특성"><svg><use href="#layers"/></svg></button>
      <label class="w-[301px] pl-[2px]">
        <svg class="h-[15px] w-[17px] shrink-0"><use href="#bulb"/></svg><svg class="size-[15px] shrink-0"><use href="#sun"/></svg><svg class="ml-[2px] size-[15px] shrink-0"><use href="#vpf"/></svg><svg class="ml-[2px] size-[15px] shrink-0"><use href="#lock"/></svg>
        <span class="ml-[2px] size-[10px] shrink-0 border border-black bg-white"></span>
        <select aria-label="도면층 목록" class="pl-1"><option>0</option></select><svg class="pointer-events-none absolute right-[3px] size-[9px]"><use href="#chev"/></svg></label>
      <button aria-label="객체의 도면층을 현재로"><svg><use href="#laycur"/></svg></button>
      <button aria-label="이전 도면층"><svg><use href="#layprev"/></svg></button>
      <button aria-label="도면층 상태"><svg><use href="#laystate"/></svg></button>
    </div>
    <div role="toolbar" aria-label="특성" class="flex w-[583px] items-center border border-[#333] bg-[#606060]">
      <span class="mx-[2px] h-[13px] w-[3px] border-x border-dotted border-black"></span>
      <label class="w-[149px]"><span class="ml-[6px] size-[10px] shrink-0 border border-black bg-white"></span><select aria-label="색상" class="pl-1"><option>ByLayer</option></select><svg class="pointer-events-none absolute right-[3px] size-[9px]"><use href="#chev"/></svg></label>
      <span class="mx-[2px] h-[18px] w-[2px] border-l border-[#333] bg-[#888]"></span>
      <label class="w-[160px]"><span class="ml-[5px] h-px w-[60px] shrink-0 bg-black"></span><select aria-label="선종류" class="pl-[5px]"><option>ByLayer</option></select><svg class="pointer-events-none absolute right-[3px] size-[9px]"><use href="#chev"/></svg></label>
      <span class="mx-[2px] h-[18px] w-[2px] border-l border-[#333] bg-[#888]"></span>
      <label class="w-[125px]"><span class="ml-[5px] h-px w-[35px] shrink-0 bg-black"></span><select aria-label="선가중치" class="pl-[5px]"><option>ByLayer</option></select><svg class="pointer-events-none absolute right-[3px] size-[9px]"><use href="#chev"/></svg></label>
      <span class="mx-[2px] h-[18px] w-[2px] border-l border-[#333] bg-[#888]"></span>
      <label class="flex-1 !bg-[#c8c8c8] text-[#a0a0a0]"><select aria-label="플롯 스타일" disabled class="pl-[10px] !text-[#808080]"><option>ByColor</option></select><svg class="pointer-events-none absolute right-[3px] size-[9px]"><use href="#chev"/></svg></label>
    </div>
    <div role="toolbar" aria-label="참조 편집" class="flex items-center border border-[#333] bg-[#606060]">
      <span class="mx-[2px] h-[13px] w-[3px] border-x border-dotted border-black"></span>
      <button aria-label="참조 내부 편집"><svg><use href="#clipedit"/></svg></button>
      <span class="mx-[2px] h-[18px] w-[2px] border-l border-black bg-[#888]"></span>
      <input type="text" aria-label="참조 이름" readonly class="h-5 w-[140px] border border-[#aaa] bg-[#f0f0f0] px-1 outline-none">
      <span class="mx-px h-[18px] w-[2px] border-l border-black bg-[#888]"></span>
      <button aria-label="작업 세트에 추가"><svg><use href="#refadd"/></svg></button>
      <button aria-label="작업 세트에서 제거"><svg><use href="#refdel"/></svg></button>
      <button aria-label="참조 편집 취소"><svg><use href="#refback"/></svg></button>
      <button aria-label="참조 편집 저장"><svg><use href="#refsave"/></svg></button>
    </div>
  </div>
</div>

<!-- work area -->
<main class="flex min-h-0 flex-1 bg-[#5c5c5c]">
  <aside class="w-[29px] shrink-0">
    <div role="toolbar" aria-label="그리기" class="flex w-[25px] flex-col items-center border border-[#3a3a3a] bg-[#606060] [&>button]:grid [&>button]:h-[22px] [&>button]:w-full [&>button]:place-items-center [&>button>svg]:size-[17px]">
      <span class="my-[2px] h-[3px] w-[13px] border-y border-dotted border-black"></span>
      <button aria-label="선"><svg><use href="#line"/></svg></button>
      <button aria-label="구성선"><svg><use href="#xline"/></svg></button>
      <button aria-label="폴리선"><svg><use href="#pline"/></svg></button>
      <button aria-label="폴리곤"><svg><use href="#polygon"/></svg></button>
      <button aria-label="직사각형"><svg><use href="#rect"/></svg></button>
      <button aria-label="호"><svg><use href="#arc"/></svg></button>
      <button aria-label="원"><svg><use href="#circle"/></svg></button>
      <button aria-label="구름형 수정기호"><svg><use href="#cloud"/></svg></button>
      <button aria-label="스플라인"><svg><use href="#spline"/></svg></button>
      <button aria-label="타원"><svg><use href="#ellipse"/></svg></button>
      <button aria-label="타원 호"><svg><use href="#earc"/></svg></button>
      <button aria-label="블록 삽입"><svg><use href="#insert"/></svg></button>
      <button aria-label="블록 작성"><svg><use href="#mkblk"/></svg></button>
      <button aria-label="점"><svg><use href="#point"/></svg></button>
      <button aria-label="해치"><svg><use href="#hatch"/></svg></button>
      <button aria-label="그라데이션"><svg><use href="#grad"/></svg></button>
      <button aria-label="영역"><svg><use href="#region"/></svg></button>
      <button aria-label="테이블"><svg><use href="#table"/></svg></button>
      <button aria-label="여러 줄 문자"><svg><use href="#mtext"/></svg></button>
      <button aria-label="선택 항목 추가"><svg><use href="#addsel"/></svg></button>
    </div>
  </aside>

  <div class="mb-[2px] flex min-w-0 flex-1 flex-col">
    <div class="flex min-h-0 flex-1">
      <section aria-label="도면 영역" class="relative min-w-0 flex-1 overflow-hidden bg-black">
        <svg class="absolute inset-0 size-full" fill="none" stroke-width="1">
          <defs>
            <clipPath id="hub-top"><path d="M792 193h171v121H792z"/></clipPath>
            <clipPath id="hub-bottom"><path d="M792 476h171v141H792z"/></clipPath>
            <clipPath id="key"><path d="M806 316h143v44H806z"/></clipPath>
            <clipPath id="shaft"><path clip-rule="evenodd" d="M743 335L736 342V468L743 475H1056.500C1059 468 1062 460 1062 450C1062 438 1056 428 1045 411C1037 398 1030.500 388 1030.500 372C1030.500 362 1033 352 1043.500 335H949V345L934 360H806V335z"/></clipPath>
          </defs>
          <g clip-path="url(#hub-top)" stroke="#0000ff" stroke-width="1.400"><path d="M816.0 193l-130 130M847.800 193l-130 130M879.600 193l-130 130M911.400 193l-130 130M943.200 193l-130 130M975.0 193l-130 130M1006.800 193l-130 130M1038.600 193l-130 130M1070.400 193l-130 130"/></g>
          <g clip-path="url(#hub-bottom)" stroke="#0000ff" stroke-width="1.400"><path d="M819.0 475.500l-150 150M850.800 475.500l-150 150M882.600 475.500l-150 150M914.400 475.500l-150 150M946.200 475.500l-150 150M978.0 475.500l-150 150M1009.800 475.500l-150 150M1041.600 475.500l-150 150M1073.400 475.500l-150 150"/></g>
          <g clip-path="url(#shaft)" stroke="#f00000" stroke-width="1.300"><path d="M770.200 334.500l-150 150M802.0 334.500l-150 150M833.800 334.500l-150 150M865.600 334.500l-150 150M897.400 334.500l-150 150M929.200 334.500l-150 150M961.0 334.500l-150 150M992.800 334.500l-150 150M1024.600 334.500l-150 150M1056.400 334.500l-150 150M1088.200 334.500l-150 150M1120.0 334.500l-150 150M1151.800 334.500l-150 150M1183.600 334.500l-150 150"/></g>
          <path stroke="#c80000" d="M721 405.500h134M878 405.500h22M923 405.500h134"/>
          <g clip-path="url(#key)" stroke="#00e800" stroke-width="1.300"><path d="M770.400 316.500l50 50M802.200 316.500l50 50M834.0 316.500l50 50M865.800 316.500l50 50M897.600 316.500l50 50M929.400 316.500l50 50"/></g>
          <path stroke="#e6e6e6" d="M792.500 193.500h170v423h-170zM792.500 314.500h170M806 334.500H743L735.500 341.500V468.500L743 475.500H1056.500C1059 468 1062 460 1062 450C1062 438 1056 428 1045 411C1037 398 1030.500 388 1030.500 372C1030.500 362 1033 352 1043.500 334.500H949"/>
          <path stroke="#00e000" d="M806.500 316.500h142v43h-142z"/>
          <rect x="798" y="306.500" width="159" height="62" rx="20" ry="11" stroke="#ed1c24" stroke-width="5"/>
          <path stroke="#fff" d="M205 373.500h45M257 373.500h45M253.500 325v45M253.500 377v45M250.500 370.500h6v6h-6z"/>
        </svg>
        <!-- UCS icon -->
        <svg class="absolute bottom-3 left-3 h-20 w-[84px]" fill="none" stroke="#fff">
          <path d="M8.500 21v50.500H59M4.500 66.500h9v9h-9z"/>
          <g fill="#e6e6e6" stroke="none" font-size="18" font-weight="300" font-family="Roboto, sans-serif"><text x="11" y="17">Y</text><text x="64" y="70">X</text></g>
        </svg>
        <!-- view cube -->
        <div class="absolute top-3 right-[13px] flex w-[140px] flex-col items-center gap-[17px]">
          <svg class="h-[141px] w-[140px]" fill="#a0a0a0" font-size="19" text-anchor="middle">
            <circle cx="70" cy="70" r="53" fill="none" stroke="#2b2b2b" stroke-width="13"/>
            <path d="M44.500 44.500h51v51h-51z" fill="#a6a6a6" stroke="#7c7c7c"/><path d="M54 54h32v32H54z" fill="#92999d"/>
            <text x="70" y="22">북</text><text x="70" y="135">남</text><text x="13" y="78">서</text><text x="126" y="78">동</text>
            <text x="70" y="74" font-size="13" fill="#33383c">평면도</text>
          </svg>
          <button class="flex h-[18px] w-12 items-center gap-1 rounded border border-[#66666e] bg-[#8e8e98] px-[3px] font-['Liberation_Sans',sans-serif] text-[11px] text-[#333]">WCS<svg class="size-2 text-[#b4b4bc]"><use href="#caret"/></svg></button>
        </div>
      </section>
      <div class="flex w-[17px] shrink-0 flex-col items-center bg-[#f0f0f0] text-[#444]">
        <svg class="my-1 size-[10px] rotate-180"><use href="#chev"/></svg>
        <span class="mt-[135px] h-4 w-[15px] bg-[#cdcdcd]"></span>
        <svg class="mt-auto mb-1 size-[10px]"><use href="#chev"/></svg>
      </div>
    </div>
    <div class="flex h-[17px] shrink-0 items-center bg-[#f0f0f0] pr-5 pl-1 text-[#444]">
      <svg class="size-[10px] rotate-90"><use href="#chev"/></svg>
      <span class="mr-1 ml-auto h-[15px] w-[17px] bg-[#cdcdcd]"></span>
      <svg class="size-[10px] -rotate-90"><use href="#chev"/></svg>
    </div>
  </div>

  <aside class="flex w-8 shrink-0 flex-col gap-px pl-1">
    <div role="toolbar" aria-label="수정" class="flex w-[25px] flex-col items-center border border-[#3a3a3a] bg-[#606060] [&>button]:grid [&>button]:h-[22px] [&>button]:w-full [&>button]:place-items-center [&>button>svg]:size-[17px]">
      <span class="my-[2px] h-[3px] w-[13px] border-y border-dotted border-black"></span>
      <button aria-label="지우기"><svg><use href="#erase"/></svg></button>
      <button aria-label="복사"><svg><use href="#mcopy"/></svg></button>
      <button aria-label="대칭"><svg><use href="#mirror"/></svg></button>
      <button aria-label="간격띄우기"><svg><use href="#offset"/></svg></button>
      <button aria-label="배열"><svg><use href="#array"/></svg></button>
      <button aria-label="이동"><svg><use href="#move"/></svg></button>
      <button aria-label="회전"><svg><use href="#rotate"/></svg></button>
      <button aria-label="축척"><svg><use href="#scale"/></svg></button>
      <button aria-label="신축"><svg><use href="#stretch"/></svg></button>
      <button aria-label="자르기"><svg><use href="#trim"/></svg></button>
      <button aria-label="연장"><svg><use href="#extend"/></svg></button>
      <button aria-label="점에서 끊기"><svg><use href="#breakpt"/></svg></button>
      <button aria-label="끊기"><svg><use href="#break"/></svg></button>
      <button aria-label="결합"><svg><use href="#join"/></svg></button>
      <button aria-label="모따기"><svg><use href="#chamfer"/></svg></button>
      <button aria-label="모깎기"><svg><use href="#fillet"/></svg></button>
      <button aria-label="곡선 혼합"><svg><use href="#blend"/></svg></button>
      <button aria-label="분해"><svg><use href="#explode"/></svg></button>
    </div>
    <div role="toolbar" aria-label="그리기 순서" class="flex w-[25px] flex-col items-center border border-[#3a3a3a] bg-[#606060] [&>button]:grid [&>button]:h-[22px] [&>button]:w-full [&>button]:place-items-center [&>button>svg]:size-[17px]">
      <span class="my-[2px] h-[3px] w-[13px] border-y border-dotted border-black"></span>
      <button aria-label="맨 앞으로"><svg><use href="#front"/></svg></button>
      <button aria-label="맨 뒤로"><svg><use href="#back"/></svg></button>
      <button aria-label="객체 위로"><svg><use href="#above"/></svg></button>
      <button aria-label="객체 아래로"><svg><use href="#under"/></svg></button>
      <span class="my-px h-[2px] w-[19px] bg-[#ddd]"></span>
      <button aria-label="주석을 앞으로"><svg><use href="#annfront"/></svg></button>
      <button aria-label="해치를 뒤로"><svg><use href="#hback"/></svg></button>
    </div>
  </aside>
</main>

<!-- command window -->
<section aria-label="명령행" class="flex h-[58px] shrink-0 border border-[#6e6e6e] bg-white">
  <div class="flex w-[22px] shrink-0 flex-col items-center gap-[9px] bg-linear-to-b from-[#8c8c8c] to-[#3a3a3a] pt-1 pr-[2px]">
    <span class="h-1 w-[17px] border-y-2 border-dotted border-[#b8b8b8]"></span>
    <button aria-label="닫기"><svg class="size-[10px]"><path d="M1 1l8 8M9 1l-8 8" stroke="#fff" stroke-width="2"/></svg></button>
    <button aria-label="사용자화"><svg class="size-[15px]" viewBox="0 0 15 15"><path d="M6 7l7 7" stroke="#eee" stroke-width="3"/><path d="M1 3l3 3 2-2-3-3c4-1 6 2 5 4S5 9 3 8 0 5 1 3z" fill="#eee"/></svg></button>
  </div>
  <div class="flex min-w-0 flex-1 flex-col font-['Liberation_Mono','Noto_Sans_CJK_KR',monospace] text-[17px]">
    <output class="flex h-[34px] items-end border-b border-[#6e6e6e] bg-[#c8c8c8] pl-[2px] leading-[18px] font-medium text-black">모형 재생성 줌.</output>
    <label class="flex flex-1 items-center pl-[5px]">
      <span class="grid h-[14px] w-[15px] place-items-center border border-[#8a929c] bg-[#dfe4ea]"><svg class="size-[11px]"><path d="M1 2l4 3.500L1 9M6 9h5" fill="none" stroke="#345" stroke-width="1.300"/></svg></span>
      <svg class="mx-[3px] size-2 text-[#777]"><use href="#caret"/></svg>
      <input type="text" aria-label="명령 입력" placeholder="명령 입력" class="h-full min-w-0 flex-1 pt-[2px] pl-[3px] text-black italic outline-none placeholder:text-[#999]">
    </label>
  </div>
</section>

<!-- layout tabs and status bar -->
<footer class="flex h-[29px] shrink-0 items-start justify-between bg-[#383838]">
  <div class="flex pl-[11px]" role="tablist">
    <button role="tab" aria-selected="true" class="relative h-[18px] w-[48px] leading-4 font-bold">
      <svg class="absolute inset-0 size-full" viewBox="0 0 48 18" preserveAspectRatio="none"><path d="M0 0h48c-5 2-3 17-9 17H9C3 17 5 2 0 0z" fill="url(#g-btab)"/></svg><span class="relative">모형</span></button>
    <button role="tab" aria-selected="false" class="relative h-[18px] w-[54px] leading-4 text-[#b4b4b4]">
      <svg class="absolute inset-0 size-full" viewBox="0 0 56 18" preserveAspectRatio="none"><path d="M0 0h56c-6 2-4 17-10 17H9C3 17 5 2 0 0z" fill="#5a5a5a"/></svg><span class="relative">배치1</span></button>
    <button aria-label="새 배치" class="ml-1 grid h-4 w-[22px] place-items-center rounded-tl-lg rounded-br-lg bg-[#555]"><svg class="size-2"><path d="M4 0v8M0 4h8" stroke="#ccc" stroke-width="2"/></svg></button>
  </div>
  <div class="flex h-[27px] gap-[2px] leading-none [&>div]:flex [&>div]:items-center [&>div]:border [&>div]:border-[#7a7a7a] [&>div]:bg-[#505050] [&_button]:grid [&_button]:h-[22px] [&_button]:shrink-0 [&_button]:place-items-center">
    <div class="w-[182px] justify-end pr-1">936.5304, 514.4299, 0.0000</div>
    <div><button class="w-[26px] font-medium">모형</button></div>
    <div class="w-[64px]">
      <button aria-label="그리드" class="w-[22px]"><svg class="size-[15px]"><path d="M3.500 0v15M7.500 0v15M11.500 0v15M0 3.500h15M0 7.500h15M0 11.500h15" stroke="#ddd"/></svg></button>
      <button aria-label="스냅 모드" class="ml-[2px] w-[22px]"><svg class="size-3"><path d="M0 1h12M0 6h12M0 11h12" stroke="#ddd" stroke-width="2" stroke-dasharray="2 3"/></svg></button>
      <svg class="ml-1 size-2"><use href="#caret"/></svg>
    </div>
    <div class="w-[166px] pl-px">
      <button aria-label="직교 모드" class="w-[22px] bg-[#5c8fc8]"><svg class="size-4"><path d="M1.500 0v14.500H16M1.500 9.500h5v5" fill="none" stroke="#fff" stroke-width="1.300"/></svg></button>
      <button aria-label="극좌표 추적" class="ml-1 w-[18px]"><svg class="size-4"><circle cx="7" cy="8" r="6" fill="none" stroke="#ddd"/><path d="M7 8h9M7 8l6-6" stroke="#ddd" stroke-width="1.300"/></svg></button>
      <svg class="ml-[6px] size-2"><use href="#caret"/></svg>
      <button aria-label="등각투영 제도" class="ml-2 w-[18px]"><svg class="size-[14px]"><path d="M1 1l12 12" stroke="#f06868" stroke-width="1.400"/><path d="M7.500 0v14" stroke="#50d070"/></svg></button>
      <svg class="ml-[6px] size-2"><use href="#caret"/></svg>
      <button aria-label="객체 스냅 추적" class="ml-[5px] w-[22px] bg-[#5c8fc8]"><svg class="size-[17px]"><path d="M1 14.500h15M1 14.500L13 2" stroke="#fff" stroke-width="1.300"/><path d="M6 7h3v3H6z" fill="#fff"/></svg></button>
      <button aria-label="객체 스냅" class="ml-[2px] w-[22px] bg-[#5c8fc8]"><svg class="size-[17px]"><path d="M1 1h4v4H1zM7 3.500h8.500v12h-13V7" fill="none" stroke="#fff" stroke-width="1.300"/></svg></button>
      <svg class="ml-[5px] size-2"><use href="#caret"/></svg>
    </div>
    <div class="w-[106px] pl-px">
      <button aria-label="주석 표시" class="w-[22px] bg-[#5c8fc8]"><svg class="size-[17px]" viewBox="0 0 17 17"><path d="M7 1l3 8 4 7-5-3H5l-5 3 4-7z" fill="#fff"/><circle cx="13" cy="4" r="2.200" fill="none" stroke="#fff"/></svg></button>
      <button aria-label="자동 축척" class="ml-[2px] w-[22px]"><svg class="size-[17px]" viewBox="0 0 17 17"><path d="M7 1l3 8 4 7-5-3H5l-5 3 4-7z" fill="#ccc"/><path d="M14 0l-3 5h2l-1 3 4-5h-2z" fill="#ddd"/></svg></button>
      <button aria-label="주석 축척" class="ml-[2px] w-[22px]"><svg class="size-[17px]" viewBox="0 0 17 17"><path d="M9 1l3 8 4 7-5-3H7l-5 3 4-7z" fill="#ccc"/></svg></button>
      <button class="ml-[6px] w-[16px]">1:1</button>
      <svg class="ml-[2px] size-2"><use href="#caret"/></svg>
    </div>
    <div class="w-[66px]">
      <button aria-label="작업공간 전환" class="w-6"><svg class="size-[15px]"><use href="#gear"/></svg></button>
      <svg class="ml-1 size-2"><use href="#caret"/></svg>
      <button aria-label="주석 감시" class="ml-1 !h-[25px] flex-1 border-l border-[#7a7a7a]"><svg class="size-4"><path d="M8 0v16M0 8h16" stroke="#ddd" stroke-width="1.500"/></svg></button>
    </div>
    <div class="w-[98px] pl-2"><svg class="h-4 w-2"><path d="M0 0h8v2H4v2h3v1H4v2h3v2H4v2h3v1H4v2h4v2H0z" fill="#ddd"/></svg>
      <label class="relative ml-[14px] flex flex-1 items-center"><select aria-label="단위" class="w-full appearance-none bg-transparent font-bold outline-none"><option>십진</option></select><svg class="pointer-events-none absolute right-1 size-2"><use href="#caret"/></svg></label></div>
    <div><button aria-label="객체 분리" class="w-6"><svg class="size-4"><path d="M.5.500h6v6h-6zM6.500 10l3.500 5.500H3z" fill="none" stroke="#ddd"/><circle cx="13" cy="6.500" r="2.800" fill="none" stroke="#ddd"/></svg></button></div>
    <div class="w-[51px]">
      <button aria-label="그래픽 성능" class="w-6"><svg class="size-4"><path d="M0 0h8l4 4v8H0z" fill="#6cb8f5"/><path d="M0 9h8v5H0z" fill="#fde040"/><path d="M5 1v7M2 4.500h6" stroke="#fff"/><path d="M8 11l3 4 5-6" fill="none" stroke="#28b048" stroke-width="2"/></svg></button>
      <button aria-label="도면 상태" class="w-6"><svg class="size-4"><path d="M0 0h14v10H0z" fill="#ddd"/><path d="M1 8l4-5 3 5 4-5" fill="none" stroke="#333"/><path d="M10 6l6 10H5z" fill="#f08030"/><path d="M10.500 9v4" stroke="#fff"/></svg></button>
    </div>
    <div class="w-[50px]">
      <button aria-label="화면 정리" class="w-6"><svg class="h-3 w-4"><path d="M.5.500h15v11H.5z" fill="none" stroke="#ddd"/><path d="M10 2.500h3.500V6M13 3l-3 3M2.500 6v3.500H6M3 9l3-3" fill="none" stroke="#ddd"/></svg></button>
      <button aria-label="사용자화" class="w-6"><svg class="h-[14px] w-4"><path d="M0 1h16M0 7h16M0 13h16" stroke="#ddd" stroke-width="2"/></svg></button>
    </div>
  </div>
</footer>
</body>
</html>
